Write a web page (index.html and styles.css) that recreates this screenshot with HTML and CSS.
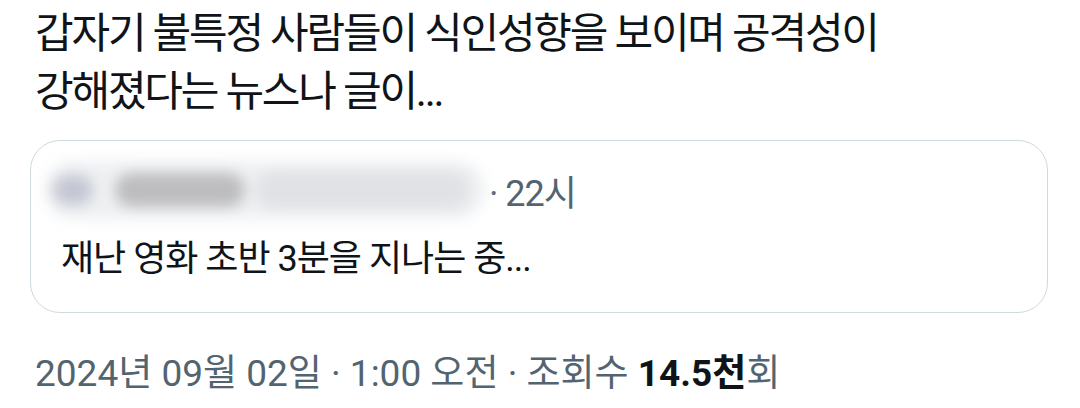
FILE: index.html
```html
<!DOCTYPE html>
<html lang="ko">
<head>
    <meta charset="UTF-8">
    <meta name="viewport" content="width=device-width, initial-scale=1.0">
    <title>게시물</title>
    <link rel="stylesheet" href="styles.css">
</head>
<body>
    <div class="post">
        <!-- 본문 -->
        <p class="post-text">갑자기 불특정 사람들이 식인성향을 보이며 공격성이<br>강해졌다는 뉴스나 글이...</p>

        <!-- 인용 카드 -->
        <div class="quote-card">
            <div class="quote-head">
                <div class="blurred-name">
                    <span class="blob blob-avatar"></span>
                    <span class="blob blob-dark"></span>
                    <span class="blob blob-light"></span>
                </div>
                <span class="quote-time">· 22시</span>
            </div>
            <p class="quote-text">재난 영화 초반 3분을 지나는 중...</p>
        </div>

        <!-- 메타 정보 -->
        <div class="post-meta">
            2024년 09월 02일 · 1:00 오전 · 조회수 <strong>14.5천</strong>회
        </div>
    </div>
</body>
</html>
```

FILE: styles.css
```css
:root {
    --text-main: #0f1419;
    --text-sub: #536471;
    --border: #cfd9de;
}

* {
    box-sizing: border-box;
    margin: 0;
    padding: 0;
}

body {
    background: #fff;
    font-family: Roboto, 'Noto Sans CJK KR', sans-serif;
    color: var(--text-main);
}

.post {
    padding: 5px 32px 0 35px;
}

.post-text {
    font-size: 42px;
    line-height: 58px;
    letter-spacing: -2.2px;
}

.quote-card {
    margin-top: 19px;
    width: 1018px;
    height: 173px;
    margin-left: -5px;
    border: 1px solid var(--border);
    border-radius: 30px;
    padding: 18px 0 0 14px;
}

.quote-head {
    display: flex;
    align-items: center;
    height: 62px;
}

.blurred-name {
    position: relative;
    width: 440px;
    height: 58px;
    border-radius: 30px;
    background: #eef0f2;
    filter: blur(7px);
}

.blob {
    position: absolute;
    border-radius: 20px;
}

.blob-avatar {
    left: 8px;
    top: 14px;
    width: 40px;
    height: 30px;
    background: #c4c6d3;
}

.blob-dark {
    left: 70px;
    top: 12px;
    width: 130px;
    height: 34px;
    background: #bdbdbf;
}

.blob-light {
    left: 210px;
    top: 10px;
    width: 215px;
    height: 38px;
    background: #e0e2e5;
}

.quote-time {
    font-size: 36px;
    color: var(--text-sub);
    margin-left: 4px;
    letter-spacing: -1px;
}

.quote-text {
    font-size: 36px;
    margin-top: 8px;
    padding-left: 16px;
    letter-spacing: -1px;
}

.post-meta {
    margin-top: 30px;
    font-size: 37px;
    color: var(--text-sub);
    letter-spacing: 0;
}

.post-meta strong {
    color: var(--text-main);
    font-weight: 700;
}
```
